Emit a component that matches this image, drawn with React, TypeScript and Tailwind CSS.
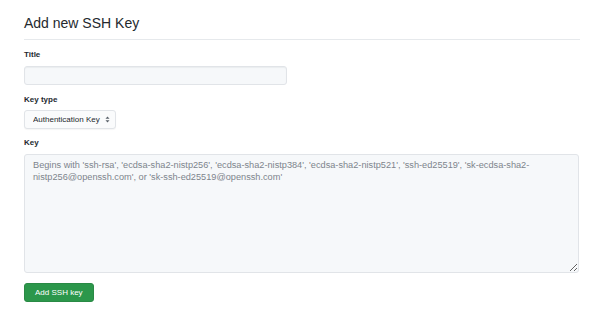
import React from 'react';

const FONT = { fontFamily: '"Liberation Sans", Arial, Helvetica, sans-serif' };

const PLACEHOLDER =
  "Begins with 'ssh-rsa', 'ecdsa-sha2-nistp256', 'ecdsa-sha2-nistp384', 'ecdsa-sha2-nistp521', 'ssh-ed25519', 'sk-ecdsa-sha2-nistp256@openssh.com', or 'sk-ssh-ed25519@openssh.com'";

function Label({ children, className = '' }: { children: React.ReactNode; className?: string }) {
  return <label className={`block text-[8px] leading-[12px] font-bold text-[#24292e] ${className}`}>{children}</label>;
}

export default function App() {
  return (
    <div className="w-[600px] h-[313px] bg-white overflow-hidden" style={FONT}>
      <div className="ml-6 w-[556px]">
        <div className="pt-[13px] pb-[6px] border-b border-[#e6e9ec]">
          <h2 className="text-[14px] leading-[20px] font-normal text-[#24292e]">Add new SSH Key</h2>
        </div>

        <Label className="mt-[9px]">Title</Label>
        <input
          type="text"
          className="mt-[5px] block w-[263px] h-[19px] rounded-[3px] border border-[#e1e4e8] bg-[#f6f8fa] outline-none shadow-[inset_0_1px_1px_rgba(27,31,35,0.05)]"
        />

        <Label className="mt-[9px]">Key type</Label>
        <div className="relative mt-[4px] w-[92px]">
          <select
            className="block w-[92px] h-[19px] appearance-none rounded-[3px] border border-[#e1e4e8] bg-[#fafbfc] pl-[8px] text-[8px] text-[#24292e] outline-none shadow-[0_1px_1px_rgba(27,31,35,0.04)]"
            style={FONT}
            defaultValue="auth"
          >
            <option value="auth">Authentication Key</option>
            <option value="sign">Signing Key</option>
          </select>
          <svg className="pointer-events-none absolute right-[6px] top-[6px]" width="5" height="7" viewBox="0 0 5 7">
            <path d="M2.5 0.5 L4.5 2.8 L0.5 2.8 Z" fill="#586069" />
            <path d="M2.5 6.5 L4.5 4.2 L0.5 4.2 Z" fill="#586069" />
          </svg>
        </div>

        <Label className="mt-[8px]">Key</Label>
        <textarea
          placeholder={PLACEHOLDER}
          className="mt-[5px] block w-[555px] h-[119px] rounded-[3px] border border-[#e1e4e8] bg-[#f6f8fa] px-[8px] pt-[5px] text-[9.2px] leading-[11.5px] text-[#24292e] placeholder:text-[#7d848c] outline-none"
          style={FONT}
        />

        <button
          className="mt-[10px] h-[19px] px-[10px] rounded-[3px] bg-[#2c974b] border border-[#2a8a45] text-white text-[8px] cursor-pointer"
          style={FONT}
        >
          Add SSH key
        </button>
      </div>
    </div>
  );
}
